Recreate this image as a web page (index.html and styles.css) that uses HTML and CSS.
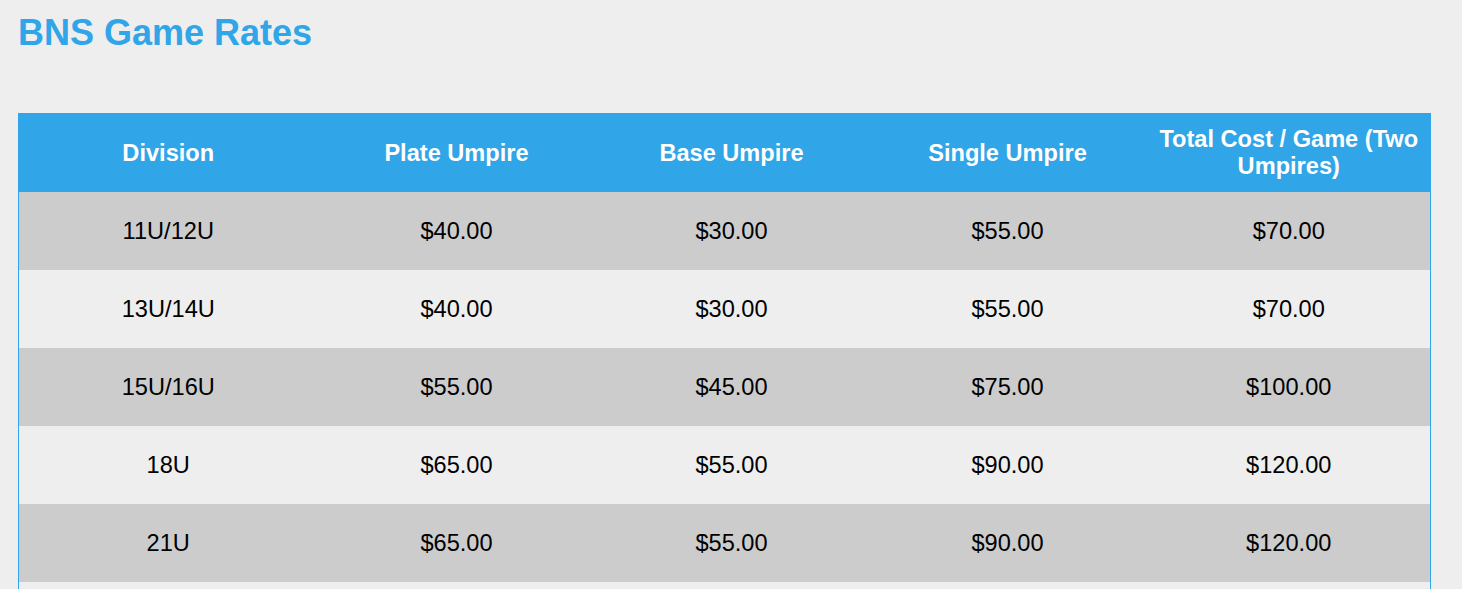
FILE: index.html
```html
<!DOCTYPE html>
<html lang="en">
<head>
<meta charset="utf-8">
<title>BNS Game Rates</title>
<link rel="stylesheet" href="styles.css">
</head>
<body>
<main class="page">
  <h1 class="title">BNS Game Rates</h1>
  <table class="rates">
    <colgroup>
      <col class="c-div">
      <col class="c-plate">
      <col class="c-base">
      <col class="c-single">
      <col class="c-total">
    </colgroup>
    <thead>
      <tr>
        <th>Division</th>
        <th>Plate Umpire</th>
        <th>Base Umpire</th>
        <th>Single Umpire</th>
        <th>Total Cost / Game (Two Umpires)</th>
      </tr>
    </thead>
    <tbody>
      <tr><td>11U/12U</td><td>$40.00</td><td>$30.00</td><td>$55.00</td><td>$70.00</td></tr>
      <tr><td>13U/14U</td><td>$40.00</td><td>$30.00</td><td>$55.00</td><td>$70.00</td></tr>
      <tr><td>15U/16U</td><td>$55.00</td><td>$45.00</td><td>$75.00</td><td>$100.00</td></tr>
      <tr><td>18U</td><td>$65.00</td><td>$55.00</td><td>$90.00</td><td>$120.00</td></tr>
      <tr><td>21U</td><td>$65.00</td><td>$55.00</td><td>$90.00</td><td>$120.00</td></tr>
      <tr><td>Adult</td><td>$65.00</td><td>$55.00</td><td>$90.00</td><td>$120.00</td></tr>
    </tbody>
  </table>
</main>
</body>
</html>
```
FILE: styles.css
```css
html, body {
  margin: 0;
  padding: 0;
  background: #eeeeee;
}

body {
  font-family: "Liberation Sans", Arial, sans-serif;
  color: #000;
}

.page {
  padding: 12px 18px 0 18px;
}

.title {
  margin: 0 0 60px 0;
  font-size: 36px;
  font-weight: bold;
  line-height: 41px;
  color: #30a5e7;
}

.rates {
  width: 1412px;
  table-layout: fixed;
  border-collapse: collapse;
  border: 1px solid #30a5e7;
}

.c-div { width: 299px; }
.c-plate { width: 278px; }
.c-base { width: 272px; }
.c-single { width: 280px; }
.c-total { width: 283px; }

.rates th {
  background: #30a5e7;
  color: #fff;
  font-size: 23.6px;
  font-weight: bold;
  line-height: 27px;
  padding: 12px 6px;
  text-align: center;
  vertical-align: middle;
}

.rates td {
  font-size: 23.6px;
  line-height: 27px;
  padding: 26px 6px 25px;
  text-align: center;
  vertical-align: middle;
}

.rates tbody tr:nth-child(odd) td {
  background: #cccccc;
}

.rates tbody tr:nth-child(even) td {
  background: #eeeeee;
}
```
